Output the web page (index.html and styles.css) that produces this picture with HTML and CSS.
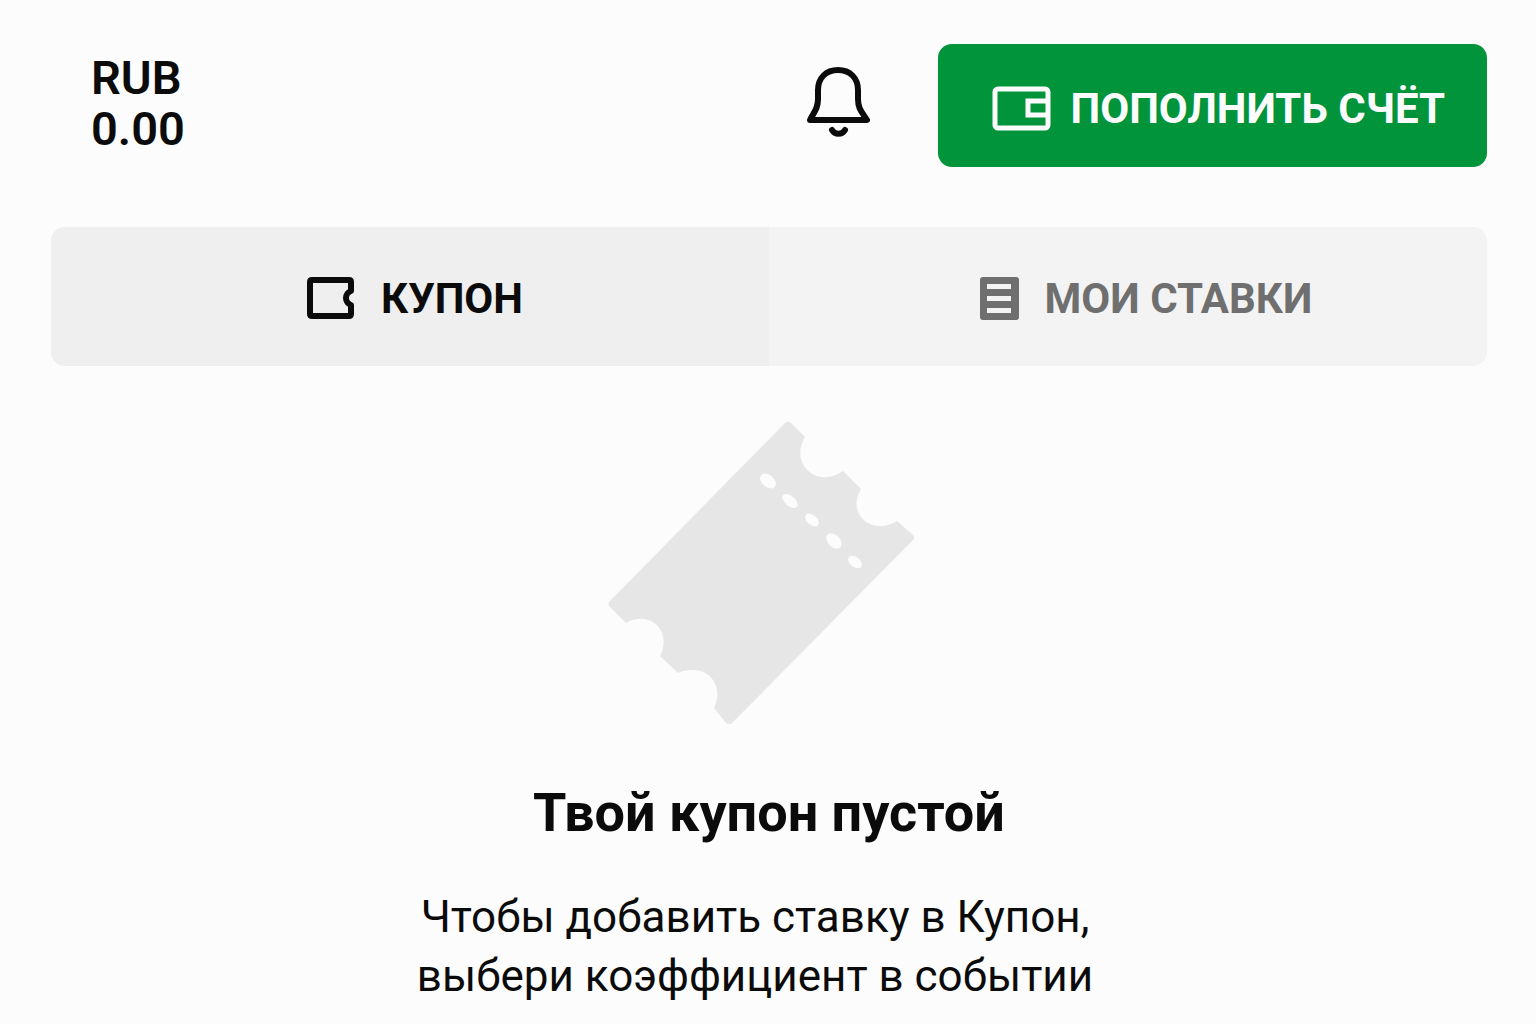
FILE: index.html
```html
<!DOCTYPE html>
<html lang="ru">
  <head>
    <meta charset="UTF-8" />
    <meta name="viewport" content="width=device-width, initial-scale=1.0" />
    <title>Купон</title>
    <link rel="stylesheet" href="styles.css">
  </head>
  <body>
    <header class="topbar">
      <div class="balance">
        <span>RUB</span>
        <span>0.00</span>
      </div>

      <button type="button" class="bell" aria-label="Уведомления">
        <svg width="64" height="72" viewBox="0 0 64 72" fill="none" stroke="currentColor" stroke-width="6" stroke-linecap="round" stroke-linejoin="round">
          <path d="M12 24C12 12 20 4 32 4S52 12 52 24V33C52 43 56 46 61 54H4C8 46 12 43 12 33Z" />
          <path d="M26 64C29 69 36 69 39 64" />
        </svg>
      </button>

      <button type="button" class="deposit">
        <svg width="59" height="45" viewBox="0 0 59 45" fill="none" stroke="currentColor" stroke-width="5">
          <rect x="3" y="3" width="53" height="39" rx="3" />
          <path d="M56 15H36V29H56" />
        </svg>
        Пополнить счёт
      </button>
    </header>

    <nav class="tabs">
      <button type="button" class="tab active">
        <svg width="48" height="43" viewBox="0 0 48 43" fill="none" stroke="currentColor" stroke-width="6" stroke-linejoin="round">
          <path d="M3 5Q3 3 5 3H42Q44 3 44 5V14C41 15 39 18 39 21S41 27 44 28V37Q44 39 42 39H5Q3 39 3 37Z" />
        </svg>
        Купон
      </button>
      <button type="button" class="tab">
        <svg width="39" height="43" viewBox="0 0 39 43">
          <path fill="currentColor" fill-rule="evenodd" d="M3 0H36Q39 0 39 3V40Q39 43 36 43H3Q0 43 0 40V3Q0 0 3 0ZM7 7V12H31V7ZM7 19V24H31V19ZM7 31V36H31V31Z" />
        </svg>
        Мои ставки
      </button>
    </nav>

    <main class="empty">
      <svg class="ticket" width="308" height="304" viewBox="0 0 308 304">
        <path class="ticket-body" d="M177 2Q180 -1 183 2L197 16C184 38 200 58 220 56Q228 55 235 50L253 68C241 88 255 106 273 105Q281 105 289 100L305 114Q307 117 305 119L124 302Q121 304 118 302L106 287C116 266 102 248 84 249Q76 249 70 252L52 235C63 213 47 196 31 198Q24 198 18 202L1 185Q0 183 1 181Z" />
        <g class="ticket-holes">
          <ellipse cx="160" cy="60" rx="9" ry="6" transform="rotate(40 160 60)" />
          <ellipse cx="182" cy="80" rx="9" ry="5" transform="rotate(40 182 80)" />
          <ellipse cx="204" cy="99" rx="8" ry="5" transform="rotate(40 204 99)" />
          <ellipse cx="226" cy="120" rx="9" ry="6" transform="rotate(43 226 120)" />
          <ellipse cx="247" cy="141" rx="8" ry="5" transform="rotate(38 247 141)" />
        </g>
      </svg>
      <h1>Твой купон пустой</h1>
      <p>Чтобы добавить ставку в Купон,<br>выбери коэффициент в событии</p>
    </main>
  </body>
</html>
```

FILE: styles.css
```css
* {
    box-sizing: border-box;
}

body {
    margin: 0;
    padding: 44px 49px 0 51px;
    background-color: #fcfcfc;
    color: #0b0b0b;
    font-family: Roboto, "Liberation Sans", sans-serif;
}

button {
    border: none;
    font-family: inherit;
    font-size: 42px;
    font-weight: 700;
    text-transform: uppercase;
    white-space: nowrap;
    cursor: pointer;
}

svg {
    display: block;
    flex-shrink: 0;
}

/* Header */
.topbar {
    display: flex;
    align-items: center;
}

.balance {
    display: flex;
    flex-direction: column;
    margin-right: auto;
    padding: 0 0 6px 40px;
    font-size: 47px;
    font-weight: 600;
    line-height: 51px;
}

.bell {
    margin-right: 68px;
    padding: 0 0 8px;
    background: none;
    color: #0b0b0b;
}

.deposit {
    display: flex;
    align-items: center;
    gap: 20px;
    height: 123px;
    padding: 5px 42px 0 54px;
    border-radius: 14px;
    background-color: #01943b;
    color: #fcfcfc;
}

/* Tabs */
.tabs {
    display: grid;
    grid-template-columns: 1fr 1fr;
    margin-top: 60px;
    border-radius: 14px;
    overflow: hidden;
}

.tab {
    display: flex;
    align-items: center;
    justify-content: center;
    gap: 26px;
    height: 139px;
    padding: 3px 0 0 36px;
    background-color: #f3f3f3;
    color: #6f6f6f;
}

.tab.active {
    padding-left: 10px;
    background-color: #efefef;
    color: #0b0b0b;
}

/* Empty coupon */
.empty {
    display: flex;
    flex-direction: column;
    align-items: center;
    padding-top: 55px;
    text-align: center;
}

.ticket {
    margin-right: 14px;
}

.ticket-body {
    fill: #e6e6e6;
}

.ticket-holes {
    fill: #fcfcfc;
}

h1 {
    margin: 55px 0 0;
    font-size: 54px;
    line-height: 66px;
}

p {
    margin: 42px 28px 0 0;
    font-size: 44px;
    line-height: 59px;
}
```
